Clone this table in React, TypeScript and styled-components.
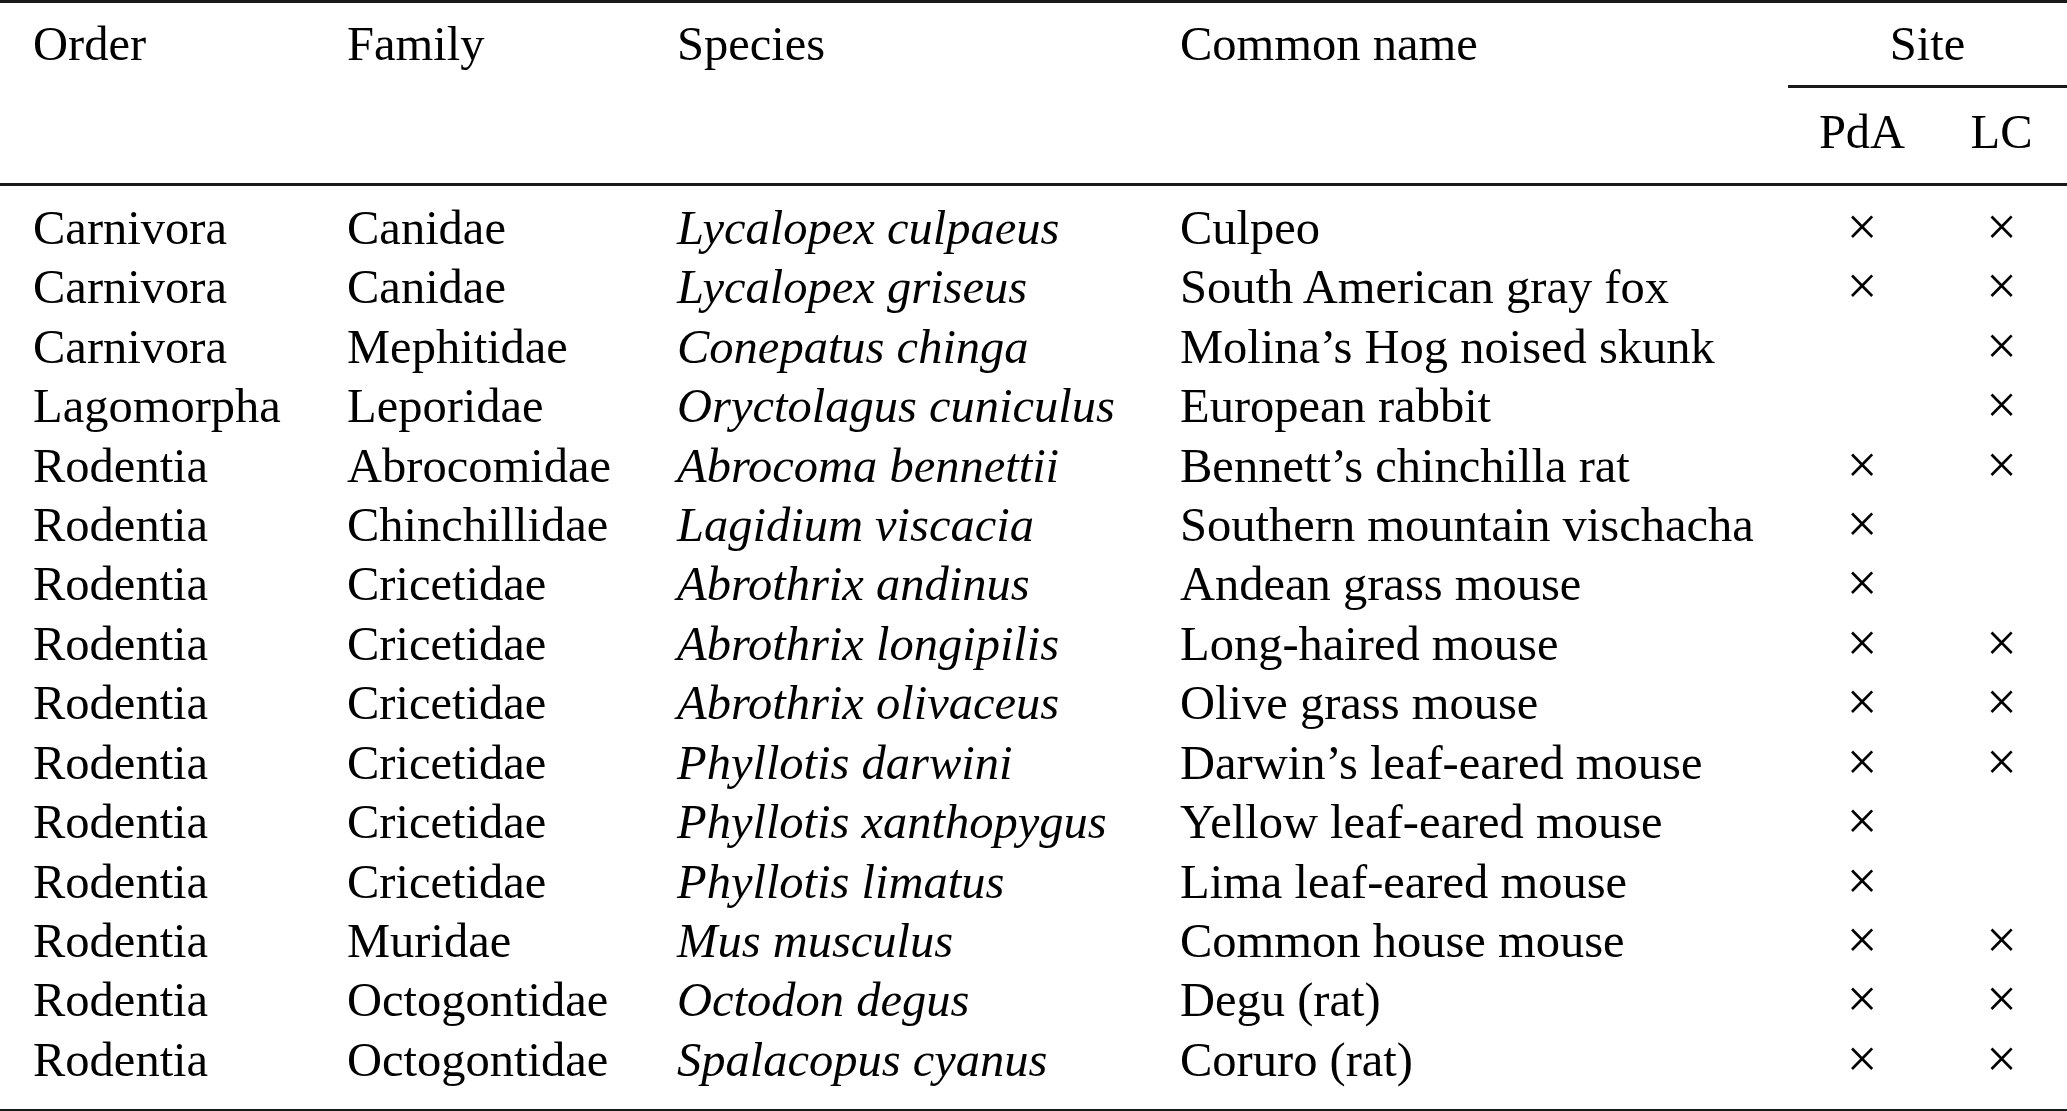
import React from "react";
import styled, { createGlobalStyle } from "styled-components";

const GlobalStyle = createGlobalStyle`
  html, body {
    margin: 0;
    padding: 0;
    background: #ffffff;
  }
  body {
    font-family: "Liberation Serif", "Times New Roman", serif;
    color: #000;
  }
`;

const COLS = "314px 330px 503px 608px 148px 131px";
const ROW_H = "59.43px";

const Table = styled.div`
  width: 2067px;
  box-sizing: border-box;
  border-top: 3px solid #1a1a1a;
  border-bottom: 3px solid #1a1a1a;
  font-size: 48.5px;
  line-height: ${ROW_H};
`;

const Head = styled.div`
  display: grid;
  grid-template-columns: ${COLS};
  grid-template-rows: auto auto;
  padding: 11px 0 21px 33px;
  border-bottom: 3px solid #1a1a1a;
`;

const HeadCell = styled.div`
  grid-row: 1;
  white-space: nowrap;
`;

const SiteGroup = styled.div`
  grid-row: 1;
  grid-column: 5 / span 2;
  text-align: center;
  padding-bottom: 12px;
  border-bottom: 3px solid #1a1a1a;
`;

const SubHead = styled.div<{ $col: number }>`
  grid-row: 2;
  grid-column: ${(p) => p.$col};
  text-align: center;
  margin-top: 14px;
`;

const Body = styled.div`
  padding: 12px 0 20px 0;
`;

const Row = styled.div`
  display: grid;
  grid-template-columns: ${COLS};
  padding-left: 33px;
  height: ${ROW_H};
`;

const Cell = styled.div<{ $italic?: boolean }>`
  white-space: nowrap;
  font-style: ${(p) => (p.$italic ? "italic" : "normal")};
`;

const Mark = styled.div`
  text-align: center;
  font-size: 1.12em;
  line-height: ${ROW_H};
  height: ${ROW_H};
  overflow: hidden;
`;

type Entry = [string, string, string, string, boolean, boolean];

const data: Entry[] = [
  ["Carnivora", "Canidae", "Lycalopex culpaeus", "Culpeo", true, true],
  ["Carnivora", "Canidae", "Lycalopex griseus", "South American gray fox", true, true],
  ["Carnivora", "Mephitidae", "Conepatus chinga", "Molina\u2019s Hog noised skunk", false, true],
  ["Lagomorpha", "Leporidae", "Oryctolagus cuniculus", "European rabbit", false, true],
  ["Rodentia", "Abrocomidae", "Abrocoma bennettii", "Bennett\u2019s chinchilla rat", true, true],
  ["Rodentia", "Chinchillidae", "Lagidium viscacia", "Southern mountain vischacha", true, false],
  ["Rodentia", "Cricetidae", "Abrothrix andinus", "Andean grass mouse", true, false],
  ["Rodentia", "Cricetidae", "Abrothrix longipilis", "Long-haired mouse", true, true],
  ["Rodentia", "Cricetidae", "Abrothrix olivaceus", "Olive grass mouse", true, true],
  ["Rodentia", "Cricetidae", "Phyllotis darwini", "Darwin\u2019s leaf-eared mouse", true, true],
  ["Rodentia", "Cricetidae", "Phyllotis xanthopygus", "Yellow leaf-eared mouse", true, false],
  ["Rodentia", "Cricetidae", "Phyllotis limatus", "Lima leaf-eared mouse", true, false],
  ["Rodentia", "Muridae", "Mus musculus", "Common house mouse", true, true],
  ["Rodentia", "Octogontidae", "Octodon degus", "Degu (rat)", true, true],
  ["Rodentia", "Octogontidae", "Spalacopus cyanus", "Coruro (rat)", true, true],
];

export default function App() {
  return (
    <>
      <GlobalStyle />
      <Table>
        <Head>
          <HeadCell>Order</HeadCell>
          <HeadCell>Family</HeadCell>
          <HeadCell>Species</HeadCell>
          <HeadCell>Common name</HeadCell>
          <SiteGroup>Site</SiteGroup>
          <SubHead $col={5}>PdA</SubHead>
          <SubHead $col={6}>LC</SubHead>
        </Head>
        <Body>
          {data.map(([order, family, species, common, pda, lc], i) => (
            <Row key={i}>
              <Cell>{order}</Cell>
              <Cell>{family}</Cell>
              <Cell $italic>{species}</Cell>
              <Cell>{common}</Cell>
              <Mark>{pda ? "\u00d7" : ""}</Mark>
              <Mark>{lc ? "\u00d7" : ""}</Mark>
            </Row>
          ))}
        </Body>
      </Table>
    </>
  );
}
